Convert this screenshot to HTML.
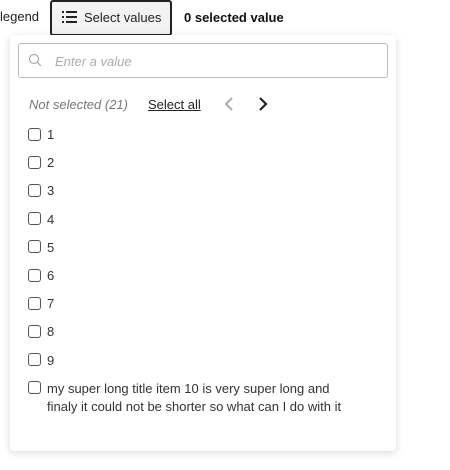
<!DOCTYPE html>
<html><head><style>
body{margin:0;width:450px;height:470px;background:#fff;font-family:"Liberation Sans",sans-serif;font-size:13px;color:#333;position:relative;overflow:hidden}
.a{position:absolute}
.cb{position:absolute;left:28px;width:11px;height:11px;border:1px solid #555;border-radius:3px;background:#fff}
.lb{position:absolute;left:47px;line-height:18px}
</style></head><body>
<div class="a" style="left:0;top:9px;color:#222">legend</div>
<div class="a" style="left:50px;top:0;width:118px;height:32px;border:2px solid #222;border-radius:3px;background:#f3f3f3;box-sizing:content-box"></div>
<svg class="a" style="left:62px;top:11px" width="16" height="12"><g fill="#222"><rect x="0" y="0" width="2" height="2"/><rect x="0" y="5" width="2" height="2"/><rect x="0" y="10" width="2" height="2"/><rect x="4" y="0" width="11" height="2"/><rect x="4" y="5" width="11" height="2"/><rect x="4" y="10" width="11" height="2"/></g></svg>
<div class="a" style="left:84px;top:10px;color:#222">Select values</div>
<div class="a" style="left:184px;top:10px;font-weight:bold;color:#111">0 selected value</div>
<div class="a" style="left:10px;top:35px;width:386px;height:416px;background:#fff;border-radius:4px;box-shadow:0 2px 8px rgba(0,0,0,0.15)"></div>
<div class="a" style="left:18px;top:43px;width:368px;height:33px;border:1px solid #bbb;border-radius:3px"></div>
<svg class="a" style="left:28px;top:53px" width="14" height="14"><circle cx="6" cy="6" r="4.5" fill="none" stroke="#aaa" stroke-width="1.2"/><line x1="9.5" y1="9.5" x2="13" y2="13" stroke="#aaa" stroke-width="1.2"/></svg>
<div class="a" style="left:55px;top:54px;font-style:italic;color:#aaa">Enter a value</div>
<div class="a" style="left:29px;top:97px;font-style:italic;color:#777">Not selected (21)</div>
<div class="a" style="left:148px;top:97px;color:#222;text-decoration:underline">Select all</div>
<svg class="a" style="left:223px;top:96px" width="12" height="16"><path d="M9 2 L3 8 L9 14" fill="none" stroke="#aaa" stroke-width="2"/></svg>
<svg class="a" style="left:257px;top:96px" width="12" height="16"><path d="M3 2 L9 8 L3 14" fill="none" stroke="#222" stroke-width="2.2"/></svg>
<div class="cb" style="top:128px"></div><div class="lb" style="top:126px">1</div>
<div class="cb" style="top:156px"></div><div class="lb" style="top:154px">2</div>
<div class="cb" style="top:184px"></div><div class="lb" style="top:182px">3</div>
<div class="cb" style="top:212px"></div><div class="lb" style="top:211px">4</div>
<div class="cb" style="top:240px"></div><div class="lb" style="top:239px">5</div>
<div class="cb" style="top:269px"></div><div class="lb" style="top:267px">6</div>
<div class="cb" style="top:297px"></div><div class="lb" style="top:295px">7</div>
<div class="cb" style="top:325px"></div><div class="lb" style="top:323px">8</div>
<div class="cb" style="top:353px"></div><div class="lb" style="top:352px">9</div>
<div class="cb" style="top:381px"></div><div class="lb" style="top:380px;width:312px">my super long title item 10 is very super long and finaly it could not be shorter so what can I do with it</div>
</body></html>
